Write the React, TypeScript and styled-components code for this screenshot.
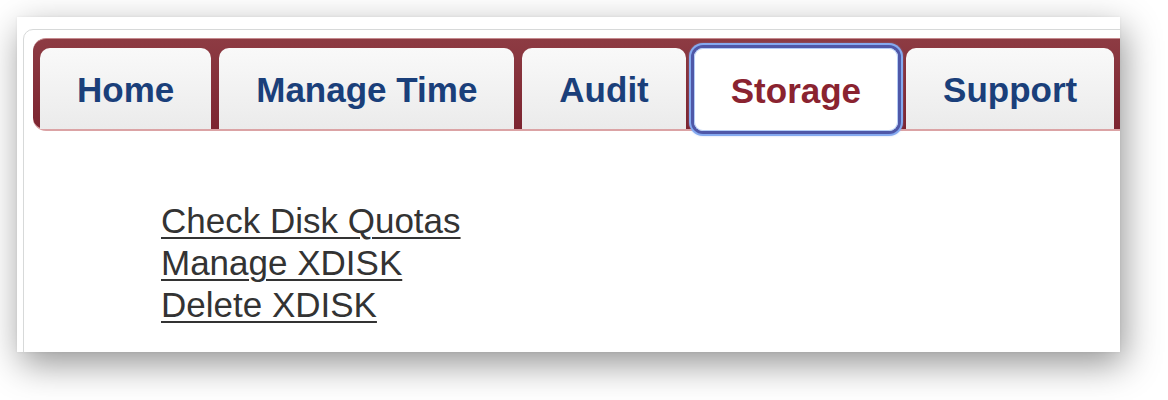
import React from "react";
import styled, { createGlobalStyle } from "styled-components";

const GlobalStyle = createGlobalStyle`
  html, body { margin: 0; padding: 0; background: #ffffff; }
  body { font-family: "Liberation Sans", Arial, sans-serif; }
`;

const Page = styled.div`
  width: 1168px;
  height: 400px;
  padding: 17px 0 0 17px;
  box-sizing: border-box;
  overflow: hidden;
`;

const Window = styled.div`
  width: 1103px;
  height: 335px;
  background: #ffffff;
  overflow: hidden;
  box-shadow: 4px 12px 34px rgba(0, 0, 0, 0.42), 0 0 3px rgba(0, 0, 0, 0.06);
  padding: 12px 0 0 6px;
  box-sizing: border-box;
`;

const Frame = styled.div`
  width: 1140px;
  height: 400px;
  border: 1px solid #d7d9d9;
  border-radius: 10px;
  padding: 8px 0 0 9px;
  box-sizing: border-box;
`;

const TabBar = styled.nav`
  display: flex;
  gap: 8px;
  align-items: flex-start;
  height: 93px;
  box-sizing: border-box;
  padding: 9px 0 0 7px;
  border-top: 1px solid #c58a8f;
  border-bottom: 2px solid #dba3a5;
  border-radius: 13px 0 0 13px;
  background: linear-gradient(#8d3b43, #7c2430);
`;

const Tab = styled.a<{ $active?: boolean }>`
  display: flex;
  align-items: center;
  justify-content: center;
  box-sizing: border-box;
  height: ${(p) => (p.$active ? "83px" : "81px")};
  margin-bottom: ${(p) => (p.$active ? "-6px" : "0")};
  padding: 2px 37px 0;
  border-radius: ${(p) => (p.$active ? "9px" : "10px 10px 0 0")};
  font-size: 35px;
  font-weight: bold;
  text-decoration: none;
  white-space: nowrap;
  color: ${(p) => (p.$active ? "#8a2330" : "#1a3f7a")};
  background: ${(p) => (p.$active ? "#ffffff" : "linear-gradient(#f9f9f9, #ebebeb)")};
  box-shadow: ${(p) =>
    p.$active
      ? "inset 0 0 0 1px #b4cdf7, 0 0 0 3px #4f58a8, 0 0 0 5px #85aaf0, 0 0 2px 5px rgba(133, 170, 240, 0.5)"
      : "none"};
  position: relative;
  z-index: ${(p) => (p.$active ? 1 : 0)};
`;

const LinkList = styled.div`
  display: flex;
  flex-direction: column;
  align-items: flex-start;
  margin: 69px 0 0 128px;
`;

const NavLink = styled.a`
  display: block;
  font-size: 35px;
  line-height: 42px;
  color: #333333;
  text-decoration: underline;
  text-decoration-thickness: 2px;
  text-underline-offset: 4px;
`;

const tabs = ["Home", "Manage Time", "Audit", "Storage", "Support"];
const links = ["Check Disk Quotas", "Manage XDISK", "Delete XDISK"];

export default function App() {
  return (
    <>
      <GlobalStyle />
      <Page>
        <Window>
          <Frame>
            <TabBar>
              {tabs.map((t) => (
                <Tab key={t} href="#" $active={t === "Storage"}>
                  {t}
                </Tab>
              ))}
            </TabBar>
            <LinkList>
              {links.map((l) => (
                <NavLink key={l} href="#">
                  {l}
                </NavLink>
              ))}
            </LinkList>
          </Frame>
        </Window>
      </Page>
    </>
  );
}
